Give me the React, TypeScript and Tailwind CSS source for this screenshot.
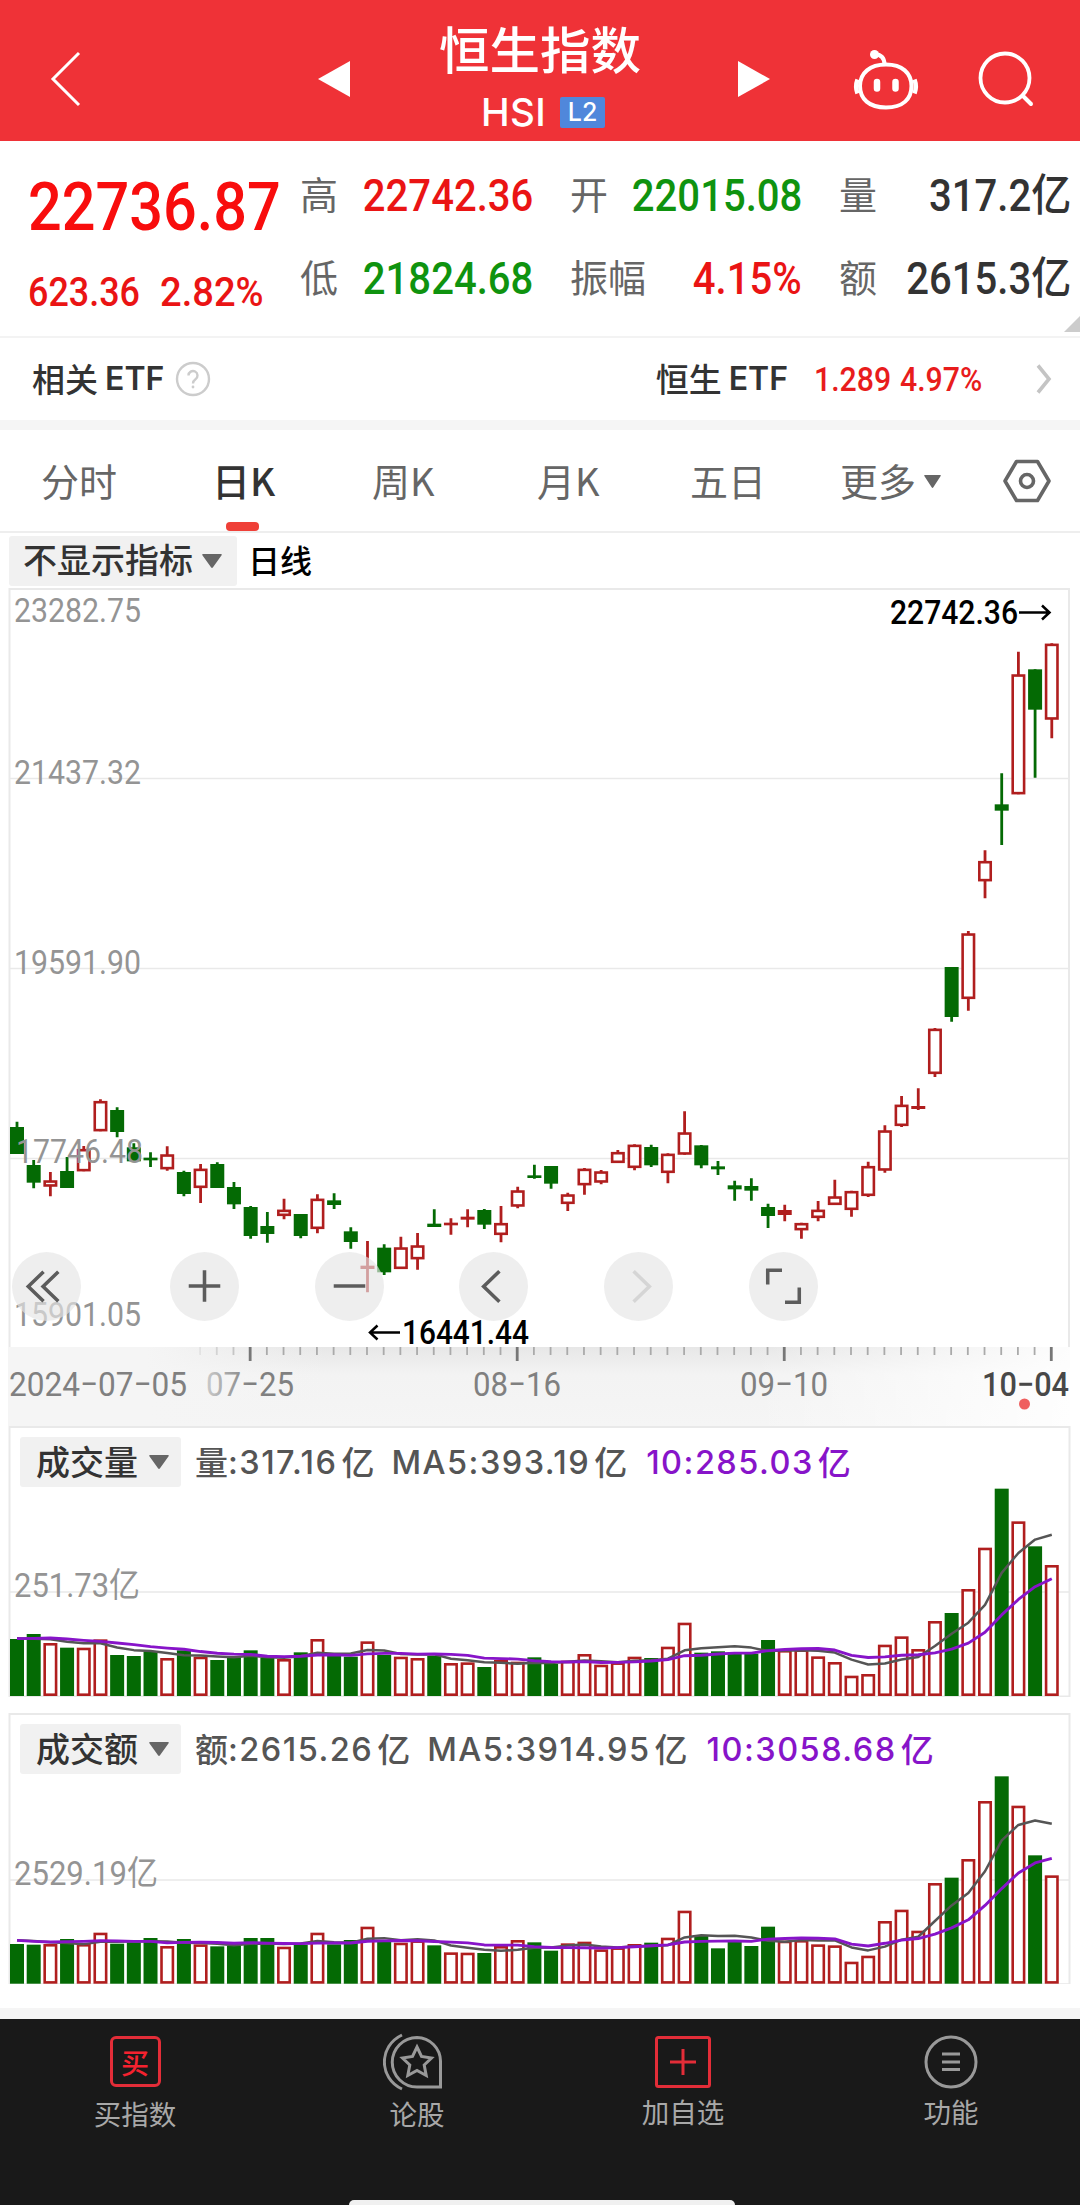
import type { ReactNode } from 'react';

type Candle = [up: number, high: number, top: number, bottom: number, low: number];

const X0 = 17;
const STEP = 16.69;
const RED = '#b01e1e';
const GREEN = '#046a04';

// Candle geometry in thirds of a pixel, measured from `base`
const segments: { base: number; bars: Candle[] }[] = [
  {
    base: 1060,
    bars: [
      [0, 185, 201, 282, 282],
      [0, 300, 315, 368, 385],
      [1, 336, 361, 380, 409],
      [0, 291, 333, 384, 384],
      [1, 258, 267, 334, 334],
      [1, 118, 123, 214, 214],
      [0, 142, 150, 216, 232],
      [0, 250, 262, 304, 304],
      [0, 277, 293, 301, 321],
      [1, 259, 283, 328, 332],
      [0, 332, 336, 402, 409],
      [1, 312, 326, 384, 429],
      [0, 307, 312, 384, 384],
      [0, 366, 381, 433, 447],
      [0, 438, 441, 528, 536],
      [0, 456, 498, 522, 548],
      [1, 416, 449, 468, 478],
      [0, 462, 462, 528, 535],
      [1, 403, 416, 507, 520],
      [0, 400, 421, 435, 447],
      [0, 502, 514, 546, 566],
      [1, 543, 617, 627, 697],
      [0, 553, 563, 637, 645],
      [1, 530, 562, 627, 627],
      [1, 519, 556, 598, 629],
      [0, 448, 491, 501, 501],
      [1, 475, 488, 496, 524],
      [1, 448, 470, 479, 502],
      [0, 447, 450, 494, 507],
      [1, 438, 489, 525, 547],
      [1, 380, 391, 440, 445],
      [0, 314, 346, 354, 356],
      [0, 318, 318, 371, 386],
      [1, 398, 403, 432, 453],
      [1, 324, 326, 376, 404],
      [1, 330, 334, 368, 373],
      [1, 270, 276, 309, 309],
      [1, 253, 254, 324, 331],
      [0, 254, 261, 316, 321],
      [1, 280, 281, 339, 370],
      [1, 154, 217, 284, 284],
      [0, 255, 256, 316, 325],
      [0, 303, 319, 328, 345],
    ],
  },
  {
    base: 1020,
    bars: [
      [0, 482, 496, 508, 542],
      [0, 475, 498, 512, 542],
      [0, 551, 561, 588, 624],
      [1, 554, 570, 585, 604],
      [1, 608, 609, 631, 656],
      [1, 543, 569, 594, 604],
      [1, 479, 529, 555, 555],
      [1, 512, 513, 570, 590],
      [1, 425, 438, 528, 531],
      [1, 316, 331, 452, 458],
      [1, 228, 254, 318, 321],
      [1, 205, 258, 267, 270],
      [1, 24, 26, 162, 171],
    ],
  },
  {
    base: 580,
    bars: [
      [0, 1161, 1161, 1311, 1325],
      [1, 1053, 1060, 1257, 1292],
      [1, 811, 843, 904, 955],
      [0, 580, 673, 692, 795],
      [1, 215, 283, 643, 643],
      [0, 268, 268, 389, 593],
      [1, 190, 191, 419, 475],
    ],
  },
];

const candles = segments.flatMap(({ base, bars }) =>
  bars.map(([up, ...ys]) => {
    const [high, top, bottom, low] = ys.map((v) => base + v / 3);
    return { up: up === 1, high, top, bottom, low };
  }),
);

// Bar tops in thirds of a pixel
const volume = [
  687, 672, 699, 713, 713, 688, 735, 738, 726, 744, 721, 740, 750, 738, 721, 744, 747, 727, 687, 737, 740,
  694, 735, 740, 744, 738, 759, 757, 771, 750, 755, 742, 762, 752, 732, 764, 757, 740, 744, 710, 638, 728,
  724, 728, 731, 690, 720, 718, 739, 756, 797, 792, 704, 679, 717, 633, 609, 537, 413, 236, 334, 409, 465,
];
const turnover = [
  732, 734, 732, 717, 732, 698, 731, 727, 714, 738, 717, 733, 739, 737, 714, 714, 740, 734, 698, 733, 720,
  680, 726, 728, 721, 736, 757, 758, 759, 738, 720, 727, 752, 730, 725, 748, 742, 732, 728, 713, 632, 708,
  745, 725, 738, 680, 722, 720, 733, 736, 785, 767, 663, 629, 692, 549, 533, 477, 303, 229, 317, 466, 526,
];

function movingAverage(data: number[], n: number, seed: number[]) {
  return data.map((_, i) => {
    if (i < seed.length) return seed[i];
    const part = data.slice(i - n + 1, i + 1);
    return part.reduce((a, b) => a + b, 0) / n + 3;
  });
}

function linePoints(data: number[]) {
  return data.map((v, i) => `${X0 + i * STEP},${v / 3}`).join(' ');
}

type LabelProps = {
  x: number;
  y: number;
  w: number;
  fill?: string;
  size?: number;
  weight?: number;
  children: string;
};

function Label({ x, y, w, fill = '#999', size = 34, weight = 400, children }: LabelProps) {
  return (
    <text
      x={x}
      y={y}
      fill={fill}
      fontSize={size}
      fontWeight={weight}
      textLength={w}
      lengthAdjust="spacingAndGlyphs"
      className="font-[Roboto,'Noto_Sans_CJK_SC',sans-serif]"
    >
      {children}
    </text>
  );
}

function Num({ className, children }: { className: string; children: ReactNode }) {
  return (
    <span className={`inline-block whitespace-nowrap font-[Roboto,'Noto_Sans_CJK_SC',sans-serif] ${className}`}>
      {children}
    </span>
  );
}

function Down({ className }: { className: string }) {
  return (
    <svg viewBox="0 0 20 14" preserveAspectRatio="none" className={className}>
      <path d="M1 0h18q1.400 0 .6 1.200l-8.600 12q-1 1.400-2 0L.4 1.200Q-.4 0 1 0z" fill="#666" />
    </svg>
  );
}

function Header() {
  return (
    <header className="flex h-[141px] items-start bg-[#ef3237] text-white">
      <svg className="mt-[50px] ml-[49px] h-[58px] w-8" viewBox="0 0 32 58" fill="none" stroke="#fff" strokeWidth="3">
        <path d="M30 3L4 29l26 26" />
      </svg>
      <svg className="mt-[61px] ml-[237px] h-9 w-8" viewBox="0 0 32 36" fill="#fff">
        <path d="M32 0v36L0 18z" />
      </svg>
      <div className="ml-[50px] flex w-[280px] flex-col items-center pt-[12px]">
        <h1 className="text-[50.500px] leading-[70px] font-medium">恒生指数</h1>
        <div className="mt-[9px] flex h-[42px] items-center gap-[14px] pl-[6px]">
          <span className="font-[Inter,sans-serif] text-[38.500px] leading-[42px] font-medium tracking-[0.01em]">HSI</span>
          <span className="flex h-[31px] w-[45px] items-center justify-center rounded-[2px] bg-[#5087db] font-[Inter,sans-serif] text-[25px] leading-[31px] font-medium">
            L2
          </span>
        </div>
      </div>
      <svg className="mt-[61px] ml-[58px] h-9 w-8" viewBox="0 0 32 36" fill="#fff">
        <path d="M0 0v36l32-18z" />
      </svg>
      <svg className="mt-[48px] ml-[82px] h-[64px] w-[68px]" viewBox="0 0 68 64" fill="none" stroke="#fff" strokeWidth="4">
        <path d="M34 16.500c16 0 25.500 8.500 25.500 21.500S51 59.500 34 59.500 8 51 8 38s10-21.500 26-21.500z" />
        <path d="M32.500 16.500c0-6-3-10-10-10.500" />
        <circle cx="22.500" cy="6.500" r="4.500" fill="#fff" stroke="none" />
        <path d="M5.500 31.500c-1.500 4-1.500 10 0 14M62.500 31.500c1.500 4 1.500 10 0 14" strokeWidth="4.500" />
        <path d="M25 34v6.500M43.500 34v6.500" strokeWidth="6.500" strokeLinecap="round" />
      </svg>
      <svg className="mt-[50px] ml-[57px] h-[58px] w-[58px]" viewBox="0 0 58 58" fill="none" stroke="#fff" strokeWidth="3.800">
        <circle cx="28" cy="28" r="24.500" />
        <path d="M46 46l8 8" strokeWidth="4" strokeLinecap="round" />
      </svg>
    </header>
  );
}

const quoteRows = [
  [
    { label: '高', value: '22742.36', color: 'text-[#ea1414]' },
    { label: '开', value: '22015.08', color: 'text-[#0f930f]' },
    { label: '量', value: '317.2亿', color: 'text-[#333]' },
  ],
  [
    { label: '低', value: '21824.68', color: 'text-[#0f930f]' },
    { label: '振幅', value: '4.15%', color: 'text-[#ea1414]' },
    { label: '额', value: '2615.3亿', color: 'text-[#333]' },
  ],
];

function Quote() {
  return (
    <section className="relative flex h-[197px] border-b-2 border-[#f3f3f3]">
      <div className="w-[300px] pt-[25px] pl-[28px]">
        <Num className="h-[84px] origin-left scale-x-[.9] text-[66px] leading-[84px] font-medium text-[#f80d0d]">22736.87</Num>
        <div className="flex h-[86px] leading-[84px] text-[#ea1414]">
          <div className="w-[132px]">
            <Num className="origin-left scale-x-[.875] text-[41px] font-medium">623.36</Num>
          </div>
          <Num className="origin-left scale-x-[.93] text-[41px] font-medium">2.82%</Num>
        </div>
      </div>
      <div className="pt-3">
        {quoteRows.map((row, i) => (
          <div key={i} className="grid grid-cols-[233px_232px_232px] gap-x-[37px]">
            {row.map((q) => (
              <div key={q.label} className="flex h-[83px] justify-between">
                <span className="text-[38px] leading-[80px] text-[#666]">{q.label}</span>
                <Num className={`origin-right scale-x-[.91] text-[44px] leading-[87px] font-medium ${q.color}`}>{q.value}</Num>
              </div>
            ))}
          </div>
        ))}
      </div>
      <svg className="absolute right-0 bottom-[4px] h-4 w-4" viewBox="0 0 16 16">
        <path d="M16 0v16H0z" fill="#ccc" />
      </svg>
    </section>
  );
}

function EtfRow() {
  return (
    <section className="flex h-[92px] items-center border-b-[10px] border-[#f5f5f5] pb-px pl-[32px] text-[33px] font-medium text-[#333]">
      <span>相关</span>
      <span className="ml-[7px] font-[Inter,sans-serif] text-[32px] font-semibold">ETF</span>
      <svg className="ml-[11px] size-[36px]" viewBox="0 0 36 36" fill="none" stroke="#ccc" strokeWidth="2.400">
        <circle cx="18" cy="18" r="16" />
        <path d="M13.500 14.500a4.500 4.500 0 1 1 7 3.700c-1.700 1.200-2.500 1.900-2.500 4.300" />
        <circle cx="18" cy="26" r="1.400" fill="#ccc" stroke="none" />
      </svg>
      <span className="ml-auto">恒生</span>
      <span className="ml-[7px] font-[Inter,sans-serif] text-[32px] font-semibold">ETF</span>
      <div className="ml-[26px] w-[86px] text-[#e81c1c]">
        <Num className="origin-left scale-x-[.89] text-[34px] font-medium">1.289</Num>
      </div>
      <div className="w-[136px] text-[#e81c1c]">
        <Num className="origin-left scale-x-[.89] text-[34px] font-medium">4.97%</Num>
      </div>
      <svg className="mr-[28px] h-[30px] w-4" viewBox="0 0 16 30" fill="none" stroke="#c4c4c4" strokeWidth="3.600">
        <path d="M2 1.500L13 15 2 28.500" />
      </svg>
    </section>
  );
}

function Tabs() {
  return (
    <nav className="flex h-[103px] items-start border-b-2 border-[#eee] text-[38px] leading-[100px] text-[#666]">
      <span className="ml-[41px] w-[171px]">分时</span>
      <div className="relative w-[160px] font-medium text-[#333]">
        日K
        <span className="absolute top-[92px] left-[14px] h-[9px] w-[33px] rounded-[4px] bg-[#ef4038]" />
      </div>
      <span className="w-[165px]">周K</span>
      <span className="w-[153px]">月K</span>
      <span className="w-[150px]">五日</span>
      <span>更多</span>
      <Down className="mt-[45px] ml-[8px] h-[13px] w-[17px]" />
      <svg className="mt-[29px] ml-[61px] h-[44px] w-[50px]" viewBox="0 0 50 44" fill="none" stroke="#666" strokeWidth="3.600">
        <path d="M14.500 2.500h21L47 22 35.500 41.500h-21L3 22z" strokeLinejoin="round" />
        <circle cx="25" cy="22" r="6.500" />
      </svg>
    </nav>
  );
}

const gridLabels = [
  { text: '23282.75', x: 14, y: 622 },
  { text: '21437.32', x: 14, y: 784 },
  { text: '19591.90', x: 14, y: 974 },
  { text: '17746.48', x: 16, y: 1163 },
  { text: '15901.05', x: 14, y: 1326 },
];

function PriceChart() {
  return (
    <div className="relative">
      <svg width="1080" height="838" viewBox="0 588 1080 838" className="block">
        <defs>
          <linearGradient id="axisDown" x1="0" y1="0" x2="0" y2="1">
            <stop offset="0" stopColor="#e7e7e7" />
            <stop offset=".35" stopColor="#f3f3f3" />
            <stop offset="1" stopColor="#f5f5f5" />
          </linearGradient>
          <linearGradient id="axisFade">
            <stop offset="0" stopColor="#f5f5f5" />
            <stop offset=".13" stopColor="#f5f5f5" />
            <stop offset=".3" stopColor="#f5f5f5" stopOpacity="0" />
            <stop offset=".7" stopColor="#fff" stopOpacity="0" />
            <stop offset="1" stopColor="#fff" stopOpacity=".9" />
          </linearGradient>
          <linearGradient id="dateFade" gradientUnits="userSpaceOnUse" x1="205" y1="0" x2="250" y2="0">
            <stop offset="0" stopColor="#ccc" />
            <stop offset="1" stopColor="#808080" />
          </linearGradient>
        </defs>

        <path d="M9.500 1347V589H1069V1347" fill="none" stroke="#e9e9e9" strokeWidth="2" />
        <path d="M10 778.500h1059M10 968.500h1059M10 1158.500h1059" stroke="#e9e9e9" strokeWidth="1.500" />

        {candles.map((c, i) => {
          const x = X0 + i * STEP;
          const color = c.up ? RED : GREEN;
          const h = c.bottom - c.top;
          const hollow = c.up && h > 5;
          return (
            <g key={i}>
              <path
                d={`M${x} ${c.high}V${c.top + 1}M${x} ${c.bottom - 1}V${c.low}`}
                stroke={color}
                strokeWidth="2.800"
              />
              {hollow ? (
                <rect x={x - 5.7} y={c.top + 1.2} width="11.400" height={h - 2.4} fill="#fff" stroke={color} strokeWidth="2.600" />
              ) : (
                <rect x={x - 7} y={c.top} width="14" height={h} fill={color} />
              )}
            </g>
          );
        })}

        {gridLabels.map((g) => (
          <Label key={g.text} x={g.x} y={g.y} w={127} fill="#949494">
            {g.text}
          </Label>
        ))}
        <Label x={890} y={624} w={128} fill="#000" weight={500}>
          22742.36
        </Label>
        <path d="M1019 612.500h30M1042 605.500l7.500 7-7.500 7" fill="none" stroke="#000" strokeWidth="2.500" />
        <Label x={402} y={1344} w={127} fill="#000" weight={500}>
          16441.44
        </Label>
        <path d="M400 1332.500h-30M377.500 1325.500l-7.500 7 7.500 7" fill="none" stroke="#000" strokeWidth="2.500" />

        <rect x="8" y="1347" width="1062" height="79" fill="url(#axisDown)" />
        <rect x="8" y="1347" width="1062" height="79" fill="url(#axisFade)" />
        {candles.map((_, i) => {
          if (i < 11) return null;
          const major = (i - 14) % 16 === 0;
          return (
            <path
              key={i}
              d={`M${X0 + i * STEP - 0.5} 1347v${major ? 14 : 8}`}
              stroke={major ? '#777' : '#aaa'}
              strokeWidth={major ? 2.8 : 1.8}
              opacity={i < 14 ? 0.2 + (i - 11) * 0.2 : 1}
            />
          );
        })}
        <Label x={9} y={1396} w={178} fill="#808080">2024−07−05</Label>
        <Label x={206} y={1396} w={88} fill="url(#dateFade)">07−25</Label>
        <Label x={473} y={1396} w={88} fill="#808080">08−16</Label>
        <Label x={740} y={1396} w={88} fill="#808080">09−10</Label>
        <Label x={982} y={1396} w={87} fill="#484848" weight={500}>10−04</Label>
        <circle cx="1024.500" cy="1404" r="5.500" fill="#ef5f5f" />
      </svg>
      <Controls />
    </div>
  );
}

const controls = [
  { d: 'M32 20L16.500 35 32 50M47 20L31.500 35 47 50', gap: 'ml-[12px]' },
  { d: 'M19 34.500h32M35 18.500v32', gap: 'ml-[89px]' },
  { d: 'M19 34.500h32', gap: 'ml-[75.500px]' },
  { d: 'M41 19.500L25 35 41 50.500', gap: 'ml-[75.500px]' },
  { d: 'M30 19.500L46 35 30 50.500', gap: 'ml-[75.500px]', off: true },
  { d: 'M33.500 18.500H19v14.500M51 36v15H36.500', gap: 'ml-[76px]' },
];

function Controls() {
  return (
    <div className="absolute top-[663.500px] left-0 flex">
      {controls.map((c) => (
        <svg key={c.d} className={`size-[69px] shrink-0 rounded-full bg-[#e5e5e5]/65 ${c.gap}`} viewBox="0 0 70 70" fill="none">
          <path d={c.d} stroke={c.off ? '#d5d5d5' : '#5c5c5c'} strokeWidth="3.600" />
        </svg>
      ))}
    </div>
  );
}

type SubChartProps = {
  name: string;
  values: string[];
  top: number;
  bottom: number;
  grid: number;
  gridLabel: string;
  gridLabelWidth: number;
  data: number[];
  ma5: number[];
  ma10: number[];
};

function SubChart(p: SubChartProps) {
  const height = p.bottom - p.top;
  return (
    <section className="relative h-[271px]">
      <svg width="1080" height="271" viewBox={`0 ${p.top} 1080 271`} className="block">
        <rect x="9.500" y={p.top + 1} width="1060" height={height - 0.5} fill="none" stroke="#e9e9e9" strokeWidth="2" />
        <path d={`M10 ${p.grid}h1059`} stroke="#e9e9e9" strokeWidth="1.500" />
        <Label x={14} y={p.grid + 5} w={p.gridLabelWidth} fill="#949494">
          {p.gridLabel}
        </Label>
        {p.data.map((v, i) => {
          const x = X0 + i * STEP;
          const y = p.top + v / 3;
          return candles[i].up ? (
            <rect key={i} x={x - 5.7} y={y + 1.3} width="11.400" height={p.bottom - y - 2.6} fill="#fff" stroke={RED} strokeWidth="2.600" />
          ) : (
            <rect key={i} x={x - 7} y={y} width="14" height={p.bottom - y} fill={GREEN} />
          );
        })}
        <g transform={`translate(0 ${p.top})`} fill="none" strokeLinejoin="round">
          <polyline points={linePoints(p.ma5)} stroke="#555" strokeWidth="2.500" />
          <polyline points={linePoints(p.ma10)} stroke="#8714c9" strokeWidth="2.900" />
        </g>
      </svg>
      <div className="absolute top-[11px] left-[20px] flex h-[50px] items-center text-[33px] font-medium text-[#555]">
        <div className="flex h-[50px] w-[161px] items-center rounded-[3px] bg-[#f1f1f1] pl-[16px] text-[34px] leading-[48px] text-[#333]">
          <span className="pb-[3px]">{p.name}</span>
          <Down className="ml-[11px] h-[14px] w-[20px]" />
        </div>
        <span className="ml-[14px]">{p.name.slice(-1)}</span>
        <MaValue className="" text={p.values[0]} />
        <MaValue className="ml-[17px]" text={p.values[1]} />
        <MaValue className="ml-[19px] text-[#8714c9]" text={p.values[2]} />
      </div>
    </section>
  );
}

function MaValue({ text, className }: { text: string; className: string }) {
  return (
    <span className={`flex items-center whitespace-nowrap ${className}`}>
      <span className="pt-[3px] font-[Inter,sans-serif] text-[32.500px] tracking-[0.045em]">{text}</span>
      <span className="ml-[4px]">亿</span>
    </span>
  );
}

function BottomBar() {
  return (
    <nav className="relative mt-auto flex h-[186px] bg-[#191919] text-[27.500px] leading-10 text-[#a8a8a8]">
      <div className="ml-[75px] flex w-[120px] flex-col items-center pt-[17px]">
        <span className="flex size-[51px] items-center justify-center rounded-[6px] border-[3px] border-[#e32d38] text-[28px] leading-none font-medium text-[#f5222f]">
          买
        </span>
        <span className="mt-[6px]">买指数</span>
      </div>
      <div className="ml-[160px] flex w-[124px] flex-col items-center pt-[14px]">
        <svg className="-ml-[8px] h-[58px] w-[60px]" viewBox="0 0 60 58" fill="none" stroke="#999" strokeWidth="3">
          <path d="M34 4.500a24.500 24.500 0 1 0 0 49.500h23.500V28A24 24 0 0 0 34 4.500z" />
          <path d="M19 2C-4.500 13-4.500 45 19 56" />
          <path d="M34 14l4.500 9.500 10 1.500-7.300 7 2 10.500L34 37.500 24.800 42.500l2-10.500-7.300-7 10-1.500z" />
        </svg>
        <span className="mt-[2px]">论股</span>
      </div>
      <div className="ml-[144px] flex w-[120px] flex-col items-center pt-[17px]">
        <svg className="h-[52px] w-[56px]" viewBox="0 0 56 52" fill="none" stroke="#e32d38" strokeWidth="3">
          <rect x="1.500" y="1.500" width="53" height="49" rx="2" />
          <path d="M15 26h26M28 13v26" />
        </svg>
        <span className="mt-[3px]">加自选</span>
      </div>
      <div className="ml-[148px] flex w-[120px] flex-col items-center pt-[16px]">
        <svg className="size-[54px]" viewBox="0 0 54 54" fill="none" stroke="#999" strokeWidth="3">
          <circle cx="27" cy="27" r="25" />
          <path d="M18 19h18M18 27h18M18 34.500h18" />
        </svg>
        <span className="mt-[2px]">功能</span>
      </div>
      <span className="absolute bottom-0 left-[349px] h-[5px] w-[386px] rounded-t-[5px] bg-[#f0f0f0]" />
    </nav>
  );
}

export default function App() {
  return (
    <div className="flex h-[2205px] w-[1080px] flex-col overflow-hidden bg-white font-['Noto_Sans_CJK_SC',sans-serif]">
      <Header />
      <Quote />
      <EtfRow />
      <Tabs />
      <div className="flex h-[55px] items-center pt-px pl-[9px]">
        <div className="flex h-[50px] w-[228px] items-center rounded-[3px] bg-[#f1f1f1] pl-[14px] text-[34px] leading-[46px] font-medium text-[#333]">
          <span className="pb-[4px]">不显示指标</span>
          <Down className="ml-[9px] h-[14px] w-[20px]" />
        </div>
        <span className="ml-[11px] pb-[4px] text-[32px] font-medium text-black">日线</span>
      </div>
      <PriceChart />
      <SubChart
        name="成交量"
        values={[':317.16', 'MA5:393.19', '10:285.03']}
        top={1426}
        bottom={1696}
        grid={1592}
        gridLabel="251.73亿"
        gridLabelWidth={126}
        data={volume.map((v) => v - 48)}
        ma5={movingAverage(volume, 5, [685, 686, 688, 695]).map((v) => v - 48)}
        ma10={movingAverage(volume, 10, [686, 685, 684, 687, 691, 694, 699, 704, 710]).map((v) => v - 48)}
      />
      <div className="mt-[16px] border-b-[11px] border-[#f5f5f5] pb-[24px]">
        <SubChart
          name="成交额"
          values={[':2615.26', 'MA5:3914.95', '10:3058.68']}
          top={1713}
          bottom={1983.7}
          grid={1880}
          gridLabel="2529.19亿"
          gridLabelWidth={144}
          data={turnover.map((v) => v - 39)}
          ma5={movingAverage(turnover, 5, [721, 723, 727, 729]).map((v) => v - 39)}
          ma10={movingAverage(turnover, 10, [721, 724, 726, 725, 724, 722, 723, 724, 724]).map((v) => v - 39)}
        />
      </div>
      <BottomBar />
    </div>
  );
}
